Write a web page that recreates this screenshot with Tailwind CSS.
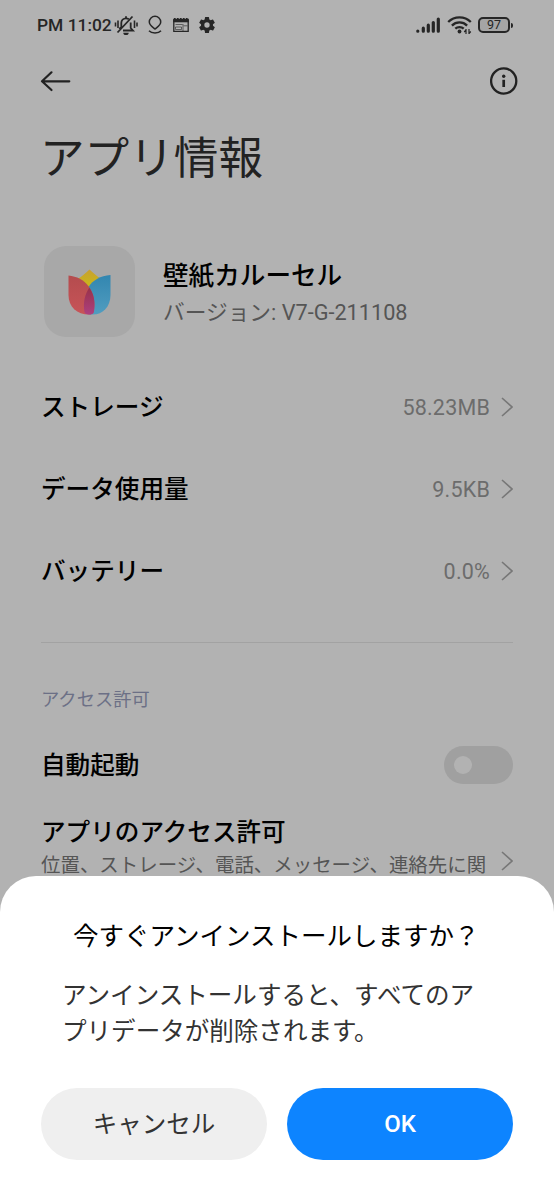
<!DOCTYPE html>
<html lang="ja">
<head>
<meta charset="utf-8">
<title>アプリ情報</title>
<script src="https://cdn.jsdelivr.net/npm/@tailwindcss/browser@4"></script>
</head>
<body class="font-[Roboto,'Noto_Sans_CJK_JP',sans-serif]">
<div class="relative h-[1200px] w-[554px] overflow-hidden bg-[#b2b2b2] text-black whitespace-nowrap">

  <!-- status bar -->
  <header class="flex h-[50px] items-center pl-[37px] pr-[41px] text-[#262626]">
    <span class="w-[77px] text-[17.400px] leading-[50px] font-medium">PM 11:02</span>
    <svg class="h-[24px] w-[24px]" viewBox="0 0 24 24" fill="none" stroke="currentColor" stroke-width="1.800">
      <path d="M1.500 9.500v4M4 7.500v7.500M20.500 7.500v7.500M23 9.500v4" stroke-width="1.600"/>
      <path d="M7.300 14.500V10c0-2.700 2-4.700 4.700-4.700 1 0 1.900.3 2.700.8M16.700 9.500v5.500l2.300 2.500H9M12 3.300v2M3.500 19.500L18.500 3.500M7.300 14l-2 2"/>
      <path d="M9.300 19.700h5.400a2.700 2.300 0 0 1-5.400 0z" fill="currentColor" stroke="none"/>
    </svg>
    <svg class="ml-[9px] h-[20px] w-[16px]" viewBox="0 0 16 20" fill="none" stroke="currentColor" stroke-width="1.500">
      <path d="M8 14C6.500 12.500 2.300 10.500 2.300 7a5.700 5.700 0 0 1 11.400 0c0 3.500-4.200 5.500-5.700 7zM2 15.700c2.500 2.900 9.500 2.900 12 0"/>
    </svg>
    <svg class="ml-[9px] h-[18px] w-[18px]" viewBox="0 0 18 18" fill="none" stroke="currentColor">
      <path d="M1.800 3.500h14.400v11.800H1.800z" stroke-width="1.300"/>
      <path d="M1.200 5h15.600" stroke-width="2.600"/>
      <path d="M2 3h14" stroke-width="1.800" stroke-dasharray="1.600 1.400"/>
      <path d="M3.500 8.500h7M11.500 9.800h4M11 8v7M3.500 11h6v2.500h-6z" stroke-width="1" opacity=".6"/>
    </svg>
    <svg class="ml-[7px] h-[20px] w-[20px]" viewBox="0 0 24 24" fill="currentColor">
      <path d="M19.140 12.940c.04-.3.06-.61.060-.94s-.02-.64-.07-.94l2.030-1.580a.49.49 0 0 0 .12-.61l-1.920-3.320a.49.49 0 0 0-.59-.22l-2.390.96a7 7 0 0 0-1.620-.94l-.36-2.540A.48.48 0 0 0 13.920 2.400h-3.840a.47.47 0 0 0-.47.410l-.36 2.540c-.59.24-1.130.57-1.620.94l-2.390-.96a.47.47 0 0 0-.59.220L2.740 8.870a.47.47 0 0 0 .12.610l2.030 1.580a6 6 0 0 0-.02 1.880l-2.030 1.580a.49.49 0 0 0-.12.610l1.920 3.320c.12.22.37.29.59.220l2.390-.96c.5.38 1.030.7 1.620.94l.36 2.540c.05.24.24.410.480.410h3.840c.24 0 .44-.17.470-.41l.36-2.540a7 7 0 0 0 1.620-.94l2.390.96c.22.08.47 0 .59-.22l1.920-3.320a.47.47 0 0 0-.12-.61zM12 15.200a3.200 3.200 0 1 1 0-6.400 3.200 3.200 0 0 1 0 6.400z"/>
    </svg>
    <svg class="ml-auto h-[18px] w-[26px]" viewBox="0 0 26 18" fill="none" stroke="currentColor" stroke-width="3.200" stroke-linecap="round">
      <path d="M2.800 15v.2M8.300 12.200v3M13.300 9.200v6M18.300 6.500v8.700M23.300 3v12.200"/>
    </svg>
    <svg class="ml-[6px] h-[20px] w-[25px]" viewBox="0 0 25 20" fill="none" stroke="currentColor" stroke-width="2.300">
      <path d="M1.200 7c6.200-6.200 16.400-6.200 22.600 0M4.900 10.600c4.200-4.200 11-4.200 15.200 0M8.300 13.700c2.300-2.200 6.100-2.200 8.400 0"/>
      <circle cx="12.500" cy="16.500" r="1.900" fill="currentColor" stroke="none"/>
      <path d="M19 14v5M22 14v5M17.200 17l1.800-2M23.800 16.500l-1.800 2" stroke-width="1.200"/>
    </svg>
    <div class="ml-[6px] flex items-center">
      <div class="flex h-[16px] w-[32px] items-center justify-center rounded-[5px] border-2 border-current bg-[#a5a5a5] text-[12.500px] leading-[12px]">97</div>
      <div class="ml-px h-[5px] w-[2px] rounded-r bg-current"></div>
    </div>
  </header>

  <!-- toolbar -->
  <nav class="flex h-[62px] items-center justify-between pl-[40px] pr-[36px] text-[#222]">
    <svg class="h-[22px] w-[32px]" viewBox="0 0 32 22" fill="none" stroke="currentColor" stroke-width="2.200" stroke-linecap="round" stroke-linejoin="round"><path d="M29.300 11.300H2M11.500 2.300L2 11.300l9.500 8.700"/></svg>
    <svg class="h-[28px] w-[28px]" viewBox="0 0 28 28" fill="none" stroke="currentColor" stroke-width="2.300"><circle cx="13.700" cy="14" r="12.600"/><path d="M13.700 12.800v7.200" stroke-width="2.700"/><circle cx="13.700" cy="9.200" r="1.700" fill="currentColor" stroke="none"/></svg>
  </nav>

  <main class="pl-[41px] pr-[41px]">
    <h1 class="-ml-px h-[134px] pt-[14px] text-[44.600px] leading-[66px] text-[#222]">アプリ情報</h1>

    <section class="flex h-[91px] items-center">
      <div class="ml-[2.500px] flex h-[91px] w-[91px] items-center justify-center rounded-[22px] bg-[#a8a8a8]">
        <svg class="h-[46px] w-[43px]" viewBox="0 0 43 46">
          <defs>
            <linearGradient id="y" x1="0" y1="0" x2="0" y2="1"><stop stop-color="#c8a030"/><stop offset=".5" stop-color="#c9b51c"/></linearGradient>
            <linearGradient id="b" x1="0" y1="0" x2="0" y2="1"><stop stop-color="#3286b0"/><stop offset="1" stop-color="#519dc0"/></linearGradient>
            <linearGradient id="r" x1="0" y1="0" x2="0" y2="1"><stop stop-color="#b44c4e"/><stop offset="1" stop-color="#c75458"/></linearGradient>
            <linearGradient id="p" x1="0" y1="0" x2="0" y2="1"><stop stop-color="#983249"/><stop offset="1" stop-color="#ad4080"/></linearGradient>
          </defs>
          <path d="M9.500 10C14 7.500 18 3.500 21.500.500 25 3.500 29 7.500 33.500 10L21.500 30z" fill="url(#y)"/>
          <path d="M42.500 6v20c0 12-8 19.500-17.500 19.500-4 0-8-.5-8.500-3C13 25 22 7 42.500 6z" fill="url(#b)"/>
          <path d="M.500 6.500C17 8 29 22 26 42c-.5 2.500-1.500 3.500-5 3.500C9 45.500.500 38 .500 26z" fill="url(#r)"/>
          <path d="M21.300 18.500c5 7 6 15 4.700 23.500-.4 2.600-1.500 3.500-5 3.500-3 0-4.300-1-4.600-3-1.400-9 .4-17 4.900-24z" fill="url(#p)"/>
        </svg>
      </div>
      <div class="ml-[28.500px] pt-[4px]">
        <div class="text-[25.600px] leading-[38px] font-medium">壁紙カルーセル</div>
        <div class="text-[21.700px] leading-[36px] text-[#555]">バージョン: V7-G-211108</div>
      </div>
    </section>

    <section class="mt-[29px] border-b border-[#a2a2a2] pb-[30px]">
      <div class="flex h-[82px] items-center"><span class="pt-[3px] text-[24.600px] font-medium">ストレージ</span><span class="ml-auto pt-[2px] text-[21.500px] tracking-[.2px] text-[#6c6c6c]">58.23MB</span><svg class="ml-[11px] h-[20px] w-[12px]" viewBox="0 0 12 20" fill="none" stroke="#777" stroke-width="1.600"><path d="M1 1l10 9-10 9"/></svg></div>
      <div class="flex h-[82px] items-center"><span class="pt-[3px] text-[24.600px] font-medium">データ使用量</span><span class="ml-auto pt-[2px] text-[21.500px] tracking-[.2px] text-[#6c6c6c]">9.5KB</span><svg class="ml-[11px] h-[20px] w-[12px]" viewBox="0 0 12 20" fill="none" stroke="#777" stroke-width="1.600"><path d="M1 1l10 9-10 9"/></svg></div>
      <div class="flex h-[82px] items-center"><span class="pt-[3px] text-[24.600px] font-medium">バッテリー</span><span class="ml-auto pt-[2px] text-[21.500px] tracking-[.2px] text-[#6c6c6c]">0.0%</span><svg class="ml-[11px] h-[20px] w-[12px]" viewBox="0 0 12 20" fill="none" stroke="#777" stroke-width="1.600"><path d="M1 1l10 9-10 9"/></svg></div>
    </section>

    <section>
      <h2 class="mt-[43px] text-[18.300px] leading-[28px] text-[#6c7086]">アクセス許可</h2>
      <div class="flex h-[102px] items-center"><span class="pt-[3px] text-[24.600px] font-medium">自動起動</span>
        <div class="ml-auto flex h-[38px] w-[69px] items-center rounded-full bg-[#a0a0a0] pl-[10px]"><div class="h-[18px] w-[18px] rounded-full bg-[#b2b2b2]"></div></div>
      </div>
      <div class="flex items-center">
        <div>
          <div class="text-[24.600px] leading-[34px] font-medium">アプリのアクセス許可</div>
          <div class="text-[19.450px] leading-[31px] text-[#555]">位置、ストレージ、電話、メッセージ、連絡先に関</div>
        </div>
        <svg class="ml-auto mt-[24px] h-[20px] w-[12px]" viewBox="0 0 12 20" fill="none" stroke="#777" stroke-width="1.600"><path d="M1 1l10 9-10 9"/></svg>
      </div>
    </section>
  </main>

  <!-- confirmation sheet -->
  <div class="absolute inset-x-0 bottom-0 h-[324px] rounded-t-[36px] bg-white px-[41px] pt-[41px]">
    <h3 class="pl-[32px] text-[25.500px] leading-[38px]">今すぐアンインストールしますか？</h3>
    <p class="mt-[23px] pl-[21px] text-[24.550px] leading-[36px] text-[#333]">アンインストールすると、すべてのア<br>プリデータが削除されます。</p>
    <div class="mt-[38px] flex gap-[20px]">
      <button class="h-[72px] flex-1 rounded-full bg-[#efefef] pt-[2px] text-[24.500px] text-[#333]">キャンセル</button>
      <button class="h-[72px] flex-1 rounded-full bg-[#0d84ff] text-[24px] font-medium text-white">OK</button>
    </div>
  </div>
</div>
</body>
</html>
